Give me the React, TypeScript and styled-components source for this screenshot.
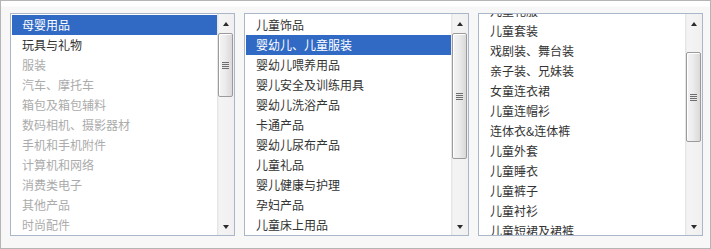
import React from "react";
import styled, { createGlobalStyle } from "styled-components";

const Global = createGlobalStyle`
  html, body { margin: 0; padding: 0; background: #ffffff; }
  body { font-family: "Noto Sans CJK SC", "Noto Sans", sans-serif; }
`;

const Frame = styled.div`
  box-sizing: border-box;
  width: 711px;
  height: 249px;
  border: 1px solid #b5b5b5;
  background: linear-gradient(to bottom, #ffffff 0, #ffffff 5px, #f7f7f7 6px, #f7f7f7 100%);
  display: flex;
  align-items: flex-start;
  gap: 9px;
  padding: 12px 7px 0 9px;
`;

const ListBox = styled.div`
  box-sizing: border-box;
  width: 225px;
  height: 223px;
  border: 1px solid #a9b7c8;
  background: #ffffff;
  display: flex;
`;

const Viewport = styled.div`
  flex: 1;
  overflow: hidden;
  padding: 1px 0 0 1px;
`;

const Content = styled.div`
  display: flex;
  flex-direction: column;
`;

type OptState = "normal" | "selected" | "disabled";

const Option = styled.div<{ $state: OptState }>`
  height: 20px;
  line-height: 20px;
  padding-left: 10px;
  font-size: 12px;
  white-space: nowrap;
  color: ${(p) =>
    p.$state === "selected" ? "#ffffff" : p.$state === "disabled" ? "#ababab" : "#333333"};
  background: ${(p) => (p.$state === "selected" ? "#316ac5" : "transparent")};
`;

const ScrollBar = styled.div`
  width: 17px;
  display: flex;
  flex-direction: column;
  background: linear-gradient(to right, #e6e6e6 0, #e6e6e6 1px, #f4f4f4 2px, #f0f0f0 100%);
`;

const ArrowButton = styled.div<{ $dir: "up" | "down" }>`
  height: 17px;
  display: flex;
  align-items: center;
  justify-content: center;
  &::after {
    content: "";
    width: 0;
    height: 0;
    border-left: 3.5px solid transparent;
    border-right: 3.5px solid transparent;
    ${(p) =>
      p.$dir === "up"
        ? "border-bottom: 4px solid #2b2b2b; margin-top: 2px;"
        : "border-top: 4px solid #2b2b2b; margin-top: 0px;"}
  }
`;

const Track = styled.div`
  flex: 1;
  padding: 0 1px;
  display: flex;
  flex-direction: column;
`;

const Thumb = styled.div`
  box-sizing: border-box;
  border: 1px solid #9b9b9b;
  border-radius: 2px;
  background: linear-gradient(to right, #f4f4f4 0%, #ececec 45%, #d9d9d9 100%);
  box-shadow: inset 1px 1px 0 #ffffff;
  display: flex;
  align-items: center;
  justify-content: center;
`;

const Grip = styled.div`
  width: 7px;
  height: 7px;
  background: repeating-linear-gradient(
    to bottom,
    #6e6e6e 0,
    #6e6e6e 1px,
    #e8e8e8 1px,
    #e8e8e8 2px
  );
`;

type ListData = {
  items: string[];
  selected: number;
  disabledFrom: number;
  scroll: number;
  thumbTop: number;
  thumbHeight: number;
};

const lists: ListData[] = [
  {
    items: [
      "母婴用品",
      "玩具与礼物",
      "服装",
      "汽车、摩托车",
      "箱包及箱包辅料",
      "数码相机、摄影器材",
      "手机和手机附件",
      "计算机和网络",
      "消费类电子",
      "其他产品",
      "时尚配件",
      "家居用品",
      "美容个人护理",
      "运动与户外",
      "办公文教用品",
      "五金工具",
      "照明产品",
      "珠宝首饰",
      "鞋类",
      "钟表",
    ],
    selected: 0,
    disabledFrom: 2,
    scroll: 0,
    thumbTop: 2,
    thumbHeight: 64,
  },
  {
    items: [
      "儿童饰品",
      "婴幼儿、儿童服装",
      "婴幼儿喂养用品",
      "婴儿安全及训练用具",
      "婴幼儿洗浴产品",
      "卡通产品",
      "婴幼儿尿布产品",
      "儿童礼品",
      "婴儿健康与护理",
      "孕妇产品",
      "儿童床上用品",
      "儿童家具",
      "婴儿推车",
      "儿童鞋",
      "儿童书包",
      "早教益智用品",
    ],
    selected: 1,
    disabledFrom: 999,
    scroll: 0,
    thumbTop: 2,
    thumbHeight: 126,
  },
  {
    items: [
      "儿童内衣裤",
      "儿童泳装",
      "儿童礼服",
      "儿童套装",
      "戏剧装、舞台装",
      "亲子装、兄妹装",
      "女童连衣裙",
      "儿童连帽衫",
      "连体衣&连体裤",
      "儿童外套",
      "儿童睡衣",
      "儿童裤子",
      "儿童衬衫",
      "儿童短裙及裙裤",
      "儿童T恤",
      "儿童背心",
      "儿童马甲",
      "儿童毛衣",
      "儿童羽绒服",
      "儿童棉衣",
      "儿童牛仔裤",
      "儿童校服",
    ],
    selected: -1,
    disabledFrom: 999,
    scroll: 54,
    thumbTop: 21,
    thumbHeight: 90,
  },
];

function List({ data }: { data: ListData }) {
  return (
    <ListBox>
      <Viewport>
        <Content style={{ marginTop: -data.scroll }}>
          {data.items.map((t, i) => (
            <Option
              key={t}
              $state={
                i === data.selected ? "selected" : i >= data.disabledFrom ? "disabled" : "normal"
              }
            >
              {t}
            </Option>
          ))}
        </Content>
      </Viewport>
      <ScrollBar>
        <ArrowButton $dir="up" />
        <Track>
          <Thumb style={{ marginTop: data.thumbTop, height: data.thumbHeight }}>
            <Grip />
          </Thumb>
        </Track>
        <ArrowButton $dir="down" />
      </ScrollBar>
    </ListBox>
  );
}

export default function App() {
  return (
    <>
      <Global />
      <Frame>
        {lists.map((l, i) => (
          <List key={i} data={l} />
        ))}
      </Frame>
    </>
  );
}
